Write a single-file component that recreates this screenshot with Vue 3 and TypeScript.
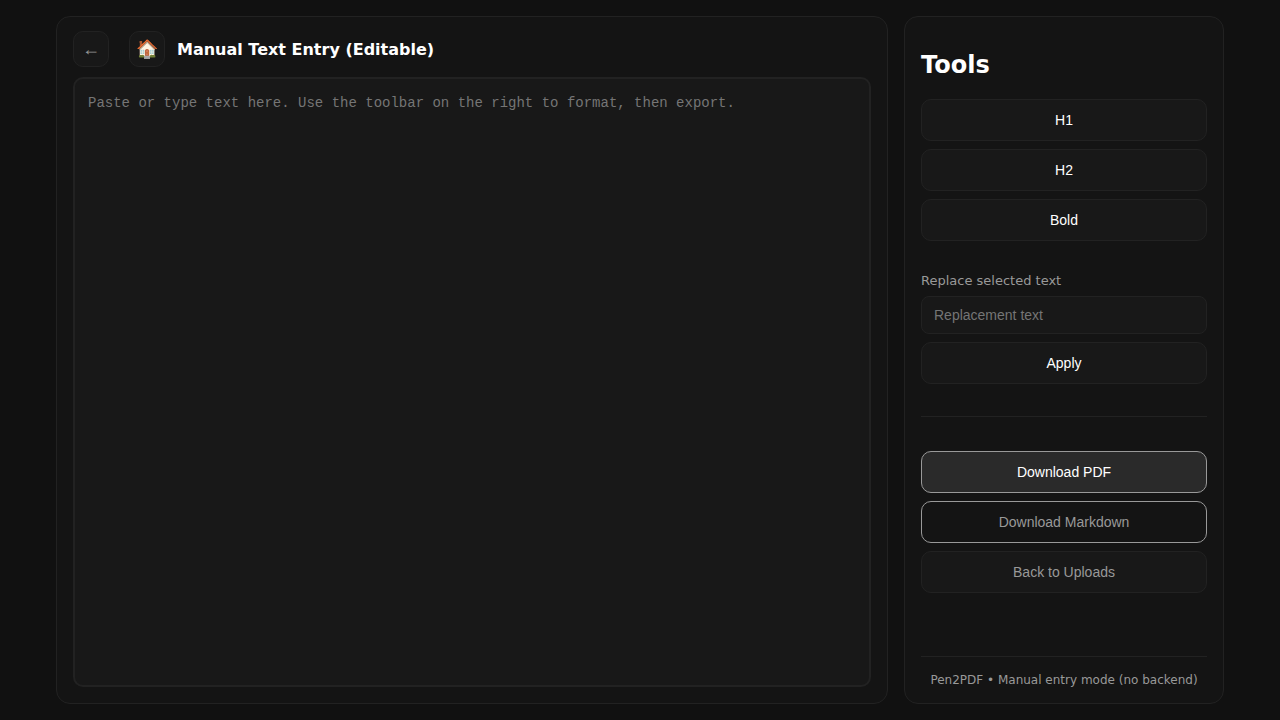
<script setup lang="ts">
import { ref } from 'vue'

const text = ref('')
const replacement = ref('')
const editor = ref<HTMLTextAreaElement | null>(null)

function replaceSelection(make: (selected: string) => string) {
  const el = editor.value
  if (!el) return
  const { selectionStart: start, selectionEnd: end } = el
  text.value = text.value.slice(0, start) + make(text.value.slice(start, end)) + text.value.slice(end)
}

const formats = [
  { label: 'H1', apply: (s: string) => `# ${s}` },
  { label: 'H2', apply: (s: string) => `## ${s}` },
  { label: 'Bold', apply: (s: string) => `**${s}**` },
]

function downloadMarkdown() {
  const url = URL.createObjectURL(new Blob([text.value], { type: 'text/markdown' }))
  const link = document.createElement('a')
  link.href = url
  link.download = 'document.md'
  link.click()
  URL.revokeObjectURL(url)
}

const printPage = () => window.print()
const goBack = () => window.history.back()
</script>

<template>
  <div class="page">
    <main class="panel editor-panel">
      <header class="bar">
        <button class="icon back" type="button" aria-label="Back" @click="goBack">←</button>
        <button class="icon home" type="button" aria-label="Home">🏠</button>
        <h1>Manual Text Entry (Editable)</h1>
      </header>
      <textarea
        ref="editor"
        v-model="text"
        aria-label="Document text"
        placeholder="Paste or type text here. Use the toolbar on the right to format, then export."
      ></textarea>
    </main>

    <aside class="panel tools">
      <h2>Tools</h2>
      <div class="group">
        <button v-for="f in formats" :key="f.label" class="btn" type="button" @click="replaceSelection(f.apply)">
          {{ f.label }}
        </button>
      </div>
      <div class="group replace">
        <label for="replacement">Replace selected text</label>
        <input id="replacement" v-model="replacement" type="text" placeholder="Replacement text" />
        <button class="btn" type="button" @click="replaceSelection(() => replacement)">Apply</button>
      </div>
      <hr />
      <div class="group">
        <button class="btn primary" type="button" @click="printPage">Download PDF</button>
        <button class="btn outline" type="button" @click="downloadMarkdown">Download Markdown</button>
        <button class="btn muted" type="button" @click="goBack">Back to Uploads</button>
      </div>
      <footer>Pen2PDF • Manual entry mode (no backend)</footer>
    </aside>
  </div>
</template>

<style>
body {
  margin: 0;
  background: #111;
}
</style>

<style scoped>
.page,
.page * {
  box-sizing: border-box;
}
.page {
  display: grid;
  grid-template-columns: minmax(0, 1fr) 320px;
  gap: 16px;
  max-width: 1200px;
  min-height: 100vh;
  margin: 0 auto;
  padding: 16px;
  color: #fff;
  font-family: "DejaVu Sans", sans-serif;
}
.panel {
  display: flex;
  flex-direction: column;
  border: 1px solid #222;
  border-radius: 14px;
  background: #141414;
}
.editor-panel {
  gap: 10px;
  padding: 14px 16px 16px;
}
.bar {
  display: flex;
  align-items: center;
  gap: 12px;
}
.icon {
  width: 36px;
  height: 36px;
  padding: 0;
  border: 1px solid #222;
  border-radius: 10px;
  background: #181818;
  color: #999;
  font: 18px "Liberation Sans", Arial, sans-serif;
}
.back {
  margin-right: 8px;
}
h1 {
  margin: 0;
  font-size: 16px;
  line-height: 19px;
}
textarea {
  flex: 1;
  width: 100%;
  padding: 14px 13px;
  border: 2px solid #222;
  border-radius: 10px;
  outline: none;
  resize: none;
  background: #181818;
  color: #fff;
  font: 14px/21px "Liberation Mono", monospace;
}
textarea::placeholder,
input::placeholder {
  color: #757575;
}
.tools {
  padding: 32px 16px 16px;
}
h2 {
  margin: 0 0 18px;
  font-size: 24px;
  line-height: 32px;
}
.group {
  display: flex;
  flex-direction: column;
  gap: 8px;
}
.btn {
  height: 42px;
  padding: 0 12px;
  border: 1px solid #222;
  border-radius: 10px;
  background: #181818;
  color: #fff;
  font: 14px "Liberation Sans", Arial, sans-serif;
}
.replace {
  margin-top: 32px;
}
label {
  color: #999;
  font-size: 13px;
  line-height: 15px;
}
input {
  width: 100%;
  height: 38px;
  padding: 0 12px;
  border: 1px solid #222;
  border-radius: 8px;
  outline: none;
  background: #181818;
  color: #fff;
  font: 14px "Liberation Sans", Arial, sans-serif;
}
hr {
  width: 100%;
  margin: 32px 0 34px;
  border: 0;
  border-top: 1px solid #222;
}
.primary {
  border-color: #999;
  background: #2a2a2a;
}
.outline {
  border-color: #999;
  background: #141414;
  color: #999;
}
.muted {
  color: #999;
}
footer {
  margin-top: auto;
  padding-top: 16px;
  border-top: 1px solid #222;
  color: #999;
  font-size: 12px;
  line-height: 14px;
  text-align: center;
}
</style>
